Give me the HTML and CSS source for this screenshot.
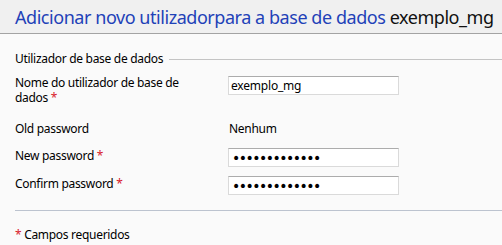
FILE: index.html
```html
<!DOCTYPE html>
<html lang="pt">
<head>
<meta charset="utf-8">
<title>Adicionar novo utilizador</title>
<link rel="stylesheet" href="styles.css">
</head>
<body>
<header class="page-head">
  <h1 class="title">Adicionar novo utilizadorpara a base de dados <span class="db-name">exemplo_mg</span></h1>
</header>
<main class="content">
  <section class="group">
    <div class="legend"><span class="legend-text">Utilizador de base de dados</span><span class="legend-rule"></span></div>
    <div class="form-grid">
      <label class="lbl lbl-wrap" for="uname">Nome do utilizador de base de dados <span class="req">*</span></label>
      <input class="field field-first" id="uname" type="text" value="exemplo_mg">

      <div class="lbl row-old">Old password</div>
      <div class="value row-old">Nenhum</div>

      <label class="lbl" for="pw1">New password <span class="req">*</span></label>
      <input class="field field-pw" id="pw1" type="password" value="exemplo_mg123">

      <label class="lbl row-confirm" for="pw2">Confirm password <span class="req">*</span></label>
      <input class="field field-pw row-confirm" id="pw2" type="password" value="exemplo_mg123">
    </div>
  </section>
  <hr class="divider">
  <p class="note"><span class="req">*</span> Campos requeridos</p>
</main>
</body>
</html>
```

FILE: styles.css
```css
* { box-sizing: border-box; }
html, body { margin: 0; padding: 0; }
body {
  background: #fafafa;
  font-family: "Noto Sans", "Open Sans", sans-serif;
  font-size: 12px;
  letter-spacing: -0.3px;
  color: #000;
  width: 502px;
  height: 245px;
  overflow: hidden;
}
.page-head {
  background: #f0f0f0;
  height: 34px;
  border-bottom: 1px solid #a3a3a3;
  padding: 4px 0 0 15px;
}
.title {
  margin: 0;
  font-weight: normal;
  font-size: 18px;
  line-height: 27px;
  color: #1f42b8;
  white-space: nowrap;
  letter-spacing: -0.45px;
}
.db-name { color: #111; }
.content { padding: 0 0 0 15px; }
.group { padding-top: 17px; }
.legend {
  display: flex;
  align-items: center;
  height: 15px;
  line-height: 15px;
}
.legend-text { padding-right: 6px; }
.legend-rule {
  flex: 1;
  border-top: 1px solid #c4c4c4;
  margin-top: 1px;
}
.form-grid {
  display: grid;
  grid-template-columns: 213px 171px;
  align-items: start;
  margin-top: 9px;
  line-height: 15px;
}
.lbl-wrap { width: 175px; }
.req { color: #d8202a; }
.field {
  height: 19px;
  width: 171px;
  margin: 0;
  border: 1px solid #dadada;
  border-top-color: #acacac;
  background: #fff;
  font-family: "Noto Sans", "Open Sans", sans-serif;
  font-size: 12px;
  letter-spacing: -0.2px;
  padding: 0 2px;
  color: #000;
  outline: none;
}
.field-first { margin-top: 1px; }
.field-pw {
  font-family: "DejaVu Sans", sans-serif;
  font-size: 14px;
  letter-spacing: -1.5px;
  padding-left: 3px;
}
.row-old { margin-top: 16px; margin-bottom: 12px; }
.value { padding-left: 1px; }
.row-confirm { margin-top: 9px; }
.divider {
  border: 0;
  border-top: 1px solid #bcc3cf;
  margin: 15px 0 0 0;
}
.note {
  margin: 16px 0 0 0;
  line-height: 15px;
}
```
